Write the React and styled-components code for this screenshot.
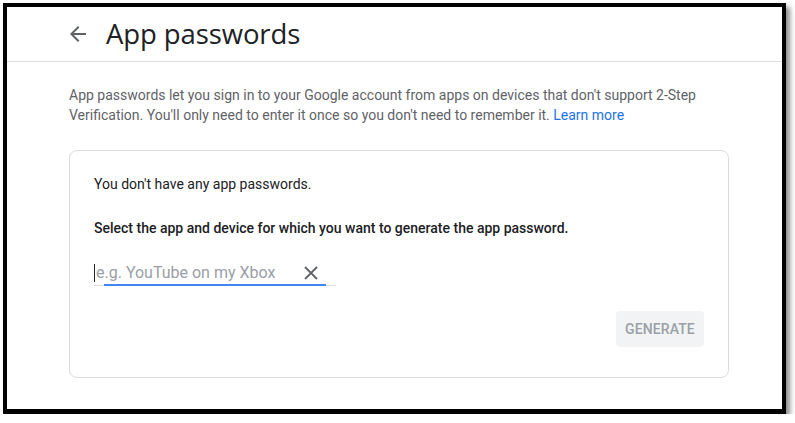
import React from "react";
import styled, { createGlobalStyle } from "styled-components";

const Global = createGlobalStyle`
  html, body { margin: 0; padding: 0; background: #ffffff; }
  body { font-family: Roboto, "Liberation Sans", Arial, sans-serif; }
  * { box-sizing: border-box; }
`;

const Frame = styled.div`
  margin: 3px 0 0 3px;
  width: 783px;
  height: 411px;
  border: 4px solid #000;
  border-bottom-width: 5px;
  background: #fff;
  box-shadow: 4px 4px 5px rgba(0, 0, 0, 0.45);
  display: flex;
  flex-direction: column;
`;

const Header = styled.header`
  height: 55px;
  border-bottom: 1px solid #dadce0;
  display: flex;
  align-items: center;
  padding-left: 59px;
  gap: 16px;
`;

const BackButton = styled.button`
  width: 24px;
  height: 24px;
  padding: 0;
  border: 0;
  background: none;
  display: flex;
  align-items: center;
  justify-content: center;
  color: #5f6368;
  cursor: pointer;
`;

const Title = styled.h1`
  margin: 0;
  font-family: "Open Sans", Roboto, sans-serif;
  font-weight: 400;
  font-size: 27.5px;
  letter-spacing: -0.1px;
  color: #202124;
  line-height: 36px;
`;

const Content = styled.main`
  padding: 23px 53px 0 62px;
  display: flex;
  flex-direction: column;
  gap: 25px;
`;

const Intro = styled.p`
  margin: 0;
  font-size: 14px;
  line-height: 20px;
  color: #5f6368;
`;

const Link = styled.a`
  color: #1a73e8;
  text-decoration: none;
`;

const Card = styled.section`
  border: 1px solid #dadce0;
  border-radius: 8px;
  height: 228px;
  padding: 23px 24px 30px 24px;
  display: flex;
  flex-direction: column;
`;

const Text = styled.p`
  margin: 0 0 24px 0;
  font-size: 14px;
  line-height: 20px;
  color: #202124;
  font-weight: ${(p) => (p.$strong ? 500 : 400)};
`;

const Field = styled.div`
  position: relative;
  width: 242px;
  height: 28px;
  margin-top: -4px;
  border-bottom: 1px solid #dadce0;
  display: flex;
  align-items: center;
  justify-content: space-between;
  padding: 2px 16px 0 0;
`;

const Underline = styled.span`
  position: absolute;
  left: 10px;
  right: 10px;
  bottom: -1px;
  height: 2px;
  background: #4285f4;
`;

const Placeholder = styled.span`
  display: flex;
  align-items: center;
  font-size: 16px;
  color: #9aa0a6;
  line-height: 20px;
`;

const Caret = styled.span`
  width: 1px;
  height: 18px;
  background: #202124;
  margin-right: 1px;
`;

const ClearButton = styled.button`
  width: 18px;
  height: 18px;
  border: 0;
  padding: 0;
  background: none;
  color: #5f6368;
  display: flex;
  align-items: center;
  justify-content: center;
`;

const Actions = styled.div`
  margin-top: auto;
  display: flex;
  justify-content: flex-end;
`;

const Generate = styled.button`
  height: 36px;
  width: 88px;
  border: 0;
  border-radius: 4px;
  background: #f1f3f4;
  color: #9aa0a6;
  font-family: Roboto, sans-serif;
  font-weight: 500;
  font-size: 14px;
  letter-spacing: 0.1px;
`;

export default function App() {
  return (
    <>
      <Global />
      <Frame>
        <Header>
          <BackButton aria-label="Back">
            <svg width="24" height="24" viewBox="0 0 24 24">
              <path
                d="M20 11H7.83l5.59-5.59L12 4l-8 8 8 8 1.41-1.41L7.83 13H20v-2z"
                fill="currentColor"
              />
            </svg>
          </BackButton>
          <Title>App passwords</Title>
        </Header>
        <Content>
          <Intro>
            App passwords let you sign in to your Google account from apps on devices that don't
            support 2-Step Verification. You'll only need to enter it once so you don't need to
            remember it. <Link href="#">Learn more</Link>
          </Intro>
          <Card>
            <Text>You don't have any app passwords.</Text>
            <Text $strong>Select the app and device for which you want to generate the app password.</Text>
            <Field>
              <Placeholder>
                <Caret />
                e.g. YouTube on my Xbox
              </Placeholder>
              <ClearButton aria-label="Clear">
                <svg width="16" height="16" viewBox="0 0 16 16">
                  <path d="M2 2L14 14M14 2L2 14" stroke="currentColor" strokeWidth="1.8" />
                </svg>
              </ClearButton>
              <Underline />
            </Field>
            <Actions>
              <Generate>GENERATE</Generate>
            </Actions>
          </Card>
        </Content>
      </Frame>
    </>
  );
}
